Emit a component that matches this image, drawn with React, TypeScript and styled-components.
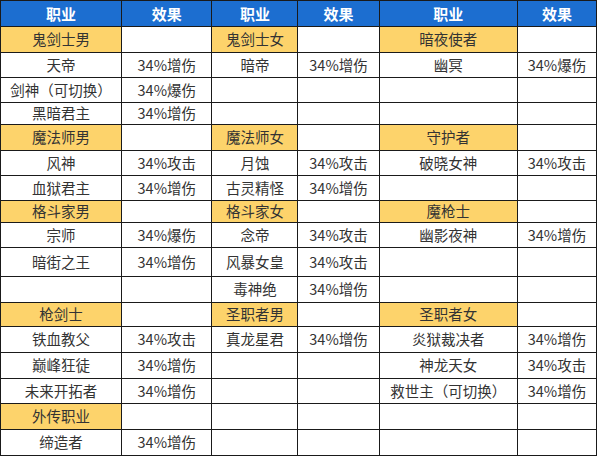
import React from 'react'
import styled, { createGlobalStyle } from 'styled-components'

const GlobalStyle = createGlobalStyle`
  html, body {
    margin: 0;
    padding: 0;
    background: #fff;
  }
  body {
    font-family: "Noto Sans CJK SC", "Microsoft YaHei", sans-serif;
  }
`

type Cell = { job?: string; effect?: string; cat?: boolean }
type Row = { h: number; cells: Cell[] }

const c = (job: string) => ({ job, cat: true })
const j = (job = '', effect = '') => ({ job, effect })

const rows: Row[] = [
  { h: 26, cells: [c('鬼剑士男'), c('鬼剑士女'), c('暗夜使者')] },
  { h: 25, cells: [j('天帝', '34%增伤'), j('暗帝', '34%增伤'), j('幽冥', '34%爆伤')] },
  { h: 25, cells: [j('剑神（可切换）', '34%爆伤'), j(), j()] },
  { h: 22, cells: [j('黑暗君主', '34%增伤'), j(), j()] },
  { h: 26, cells: [c('魔法师男'), c('魔法师女'), c('守护者')] },
  { h: 25, cells: [j('风神', '34%攻击'), j('月蚀', '34%攻击'), j('破晓女神', '34%攻击')] },
  { h: 25, cells: [j('血狱君主', '34%增伤'), j('古灵精怪', '34%增伤'), j()] },
  { h: 22, cells: [c('格斗家男'), c('格斗家女'), c('魔枪士')] },
  { h: 25, cells: [j('宗师', '34%爆伤'), j('念帝', '34%攻击'), j('幽影夜神', '34%增伤')] },
  { h: 29, cells: [j('暗街之王', '34%增伤'), j('风暴女皇', '34%攻击'), j()] },
  { h: 26, cells: [j(), j('毒神绝', '34%增伤'), j()] },
  { h: 24, cells: [c('枪剑士'), c('圣职者男'), c('圣职者女')] },
  { h: 26, cells: [j('铁血教父', '34%攻击'), j('真龙星君', '34%增伤'), j('炎狱裁决者', '34%增伤')] },
  { h: 26, cells: [j('巅峰狂徒', '34%增伤'), j(), j('神龙天女', '34%攻击')] },
  { h: 25, cells: [j('未来开拓者', '34%增伤'), j(), j('救世主（可切换）', '34%增伤')] },
  { h: 26, cells: [c('外传职业'), j(), j()] },
  { h: 26, cells: [j('缔造者', '34%增伤'), j(), j()] },
]

const widths = [121, 90, 86, 81, 138, 79]

export default function App() {
  return (
    <>
      <GlobalStyle />
      <Table>
        <colgroup>
          {widths.map((w, i) => (
            <Col key={i} $w={w} />
          ))}
        </colgroup>
        <thead>
          <Tr $h={26}>
            {[0, 1, 2].map((i) => (
              <React.Fragment key={i}>
                <Th>职业</Th>
                <Th>效果</Th>
              </React.Fragment>
            ))}
          </Tr>
        </thead>
        <tbody>
          {rows.map((r, ri) => (
            <Tr key={ri} $h={r.h}>
              {r.cells.map((cell, ci) => (
                <React.Fragment key={ci}>
                  <Td $cat={cell.cat}>{cell.job}</Td>
                  <Td>{cell.effect}</Td>
                </React.Fragment>
              ))}
            </Tr>
          ))}
        </tbody>
      </Table>
    </>
  )
}

const Table = styled.table`
  border-collapse: collapse;
  table-layout: fixed;
  width: 597px;
  border: 1px solid #222;
`

const Col = styled.col<{ $w: number }>`
  width: ${(p) => p.$w}px;
`

const Tr = styled.tr<{ $h: number }>`
  height: ${(p) => p.$h}px;
`

const Th = styled.th`
  background: #1c6ed0;
  color: #fff;
  font-size: 15px;
  font-weight: 700;
  text-align: center;
  border: 1px solid #1a1a1a;
  padding: 0;
  line-height: 1;
`

const Td = styled.td<{ $cat?: boolean }>`
  background: ${(p) => (p.$cat ? '#fdd36b' : '#fff')};
  color: #333;
  font-size: 14.5px;
  text-align: center;
  border: 1px solid #1a1a1a;
  padding: 0;
  line-height: 1;
  white-space: nowrap;
`
